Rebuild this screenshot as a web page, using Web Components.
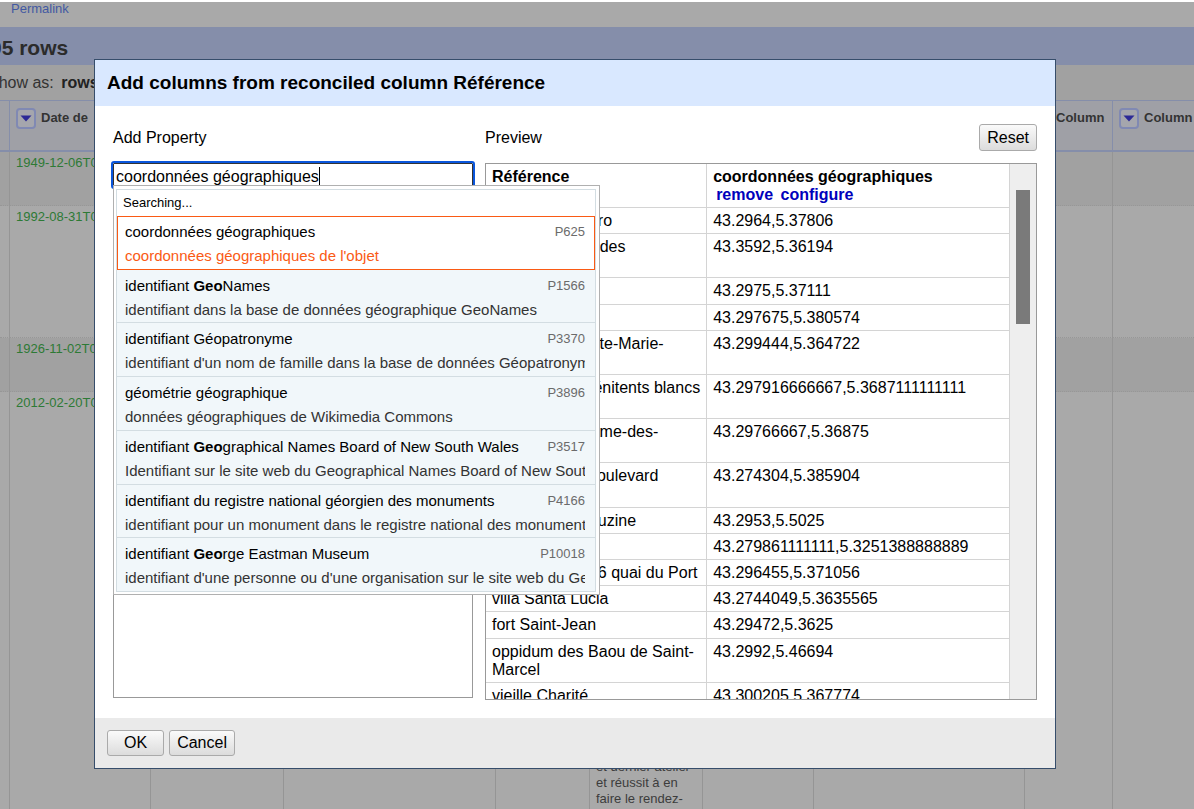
<!DOCTYPE html>
<html lang="fr">
<head>
<meta charset="utf-8">
<title>Add columns from reconciled column Référence</title>
<style>
  html, body { margin: 0; height: 100%; }
  body { font: 16px/18px "Liberation Sans", Arial, sans-serif; color: #000; background: #fff; overflow: hidden; }
</style>
</head>
<body>
<refine-project></refine-project>
<refine-dialog>
  <span slot="title">Add columns from reconciled column Référence</span>
  <property-suggest>
    <suggest-item code="P625" active>coordonnées géographiques<span slot="desc">coordonnées géographiques de l'objet</span></suggest-item>
    <suggest-item code="P1566">identifiant <b>Geo</b>Names<span slot="desc">identifiant dans la base de données géographique GeoNames</span></suggest-item>
    <suggest-item code="P3370">identifiant Géopatronyme<span slot="desc">identifiant d'un nom de famille dans la base de données Géopatronyme</span></suggest-item>
    <suggest-item code="P3896">géométrie géographique<span slot="desc">données géographiques de Wikimedia Commons</span></suggest-item>
    <suggest-item code="P3517">identifiant <b>Geo</b>graphical Names Board of New South Wales<span slot="desc">Identifiant sur le site web du Geographical Names Board of New South Wales</span></suggest-item>
    <suggest-item code="P4166">identifiant du registre national géorgien des monuments<span slot="desc">identifiant pour un monument dans le registre national des monuments</span></suggest-item>
    <suggest-item code="P10018">identifiant <b>Geo</b>rge Eastman Museum<span slot="desc">identifiant d'une personne ou d'une organisation sur le site web du George</span></suggest-item>
  </property-suggest>
  <column-preview></column-preview>
  <refine-button slot="footer" wide>OK</refine-button>
  <refine-button slot="footer">Cancel</refine-button>
</refine-dialog>

<script>
const define = (name, html, setup) => customElements.define(name, class extends HTMLElement {
  constructor() {
    super();
    this.attachShadow({ mode: 'open' }).innerHTML = html;
  }
  connectedCallback() { if (setup) setup(this, this.shadowRoot); }
});

/* Push button */
define('refine-button', `
  <style>
    :host { display: block; }
    button {
      box-sizing: border-box; height: 26px; padding: 0 7px; border: 1px solid #aaa; border-radius: 3px;
      background: linear-gradient(#fafafa, #dcdcdc); font: inherit; color: #000; display: block;
    }
    :host([wide]) button { padding: 0 16px; }
    :host([tall]) button { height: 27px; }
  </style>
  <button type="button"><slot></slot></button>`);

/* Column menu trigger of the data grid */
define('column-menu', `
  <style>
    :host { display: block; flex: none; }
    button {
      box-sizing: border-box; width: 20px; height: 21px; padding: 0; display: grid; place-items: center;
      border: 2px solid #8089b3; border-radius: 4px; background: #a5a6ad;
    }
    svg { display: block; }
  </style>
  <button type="button" aria-label="Column menu"><svg width="12" height="7" viewBox="0 0 12 7"><path d="M0.5 0.5H11.5L6 6.5Z" fill="#2c2996"/></svg></button>`);

/* Project page behind the dialog */
define('refine-project', `
  <style>
    :host { display: flex; flex-direction: column; height: 100%; box-sizing: border-box; padding-top: 2px; overflow: hidden; color: #333; }
    .top { flex: none; height: 25px; padding-left: 11px; background: #a9a9a9; font-size: 13px; line-height: 13px; }
    a { color: #4359a2; text-decoration: none; }
    h1 { flex: none; margin: 0; font-size: 21px; line-height: 42px; height: 38px; background: #858eaa; color: #2b2b2b; text-indent: -10px; white-space: nowrap; }
    .view { flex: none; height: 35px; line-height: 35px; background: #a1a1a1; text-indent: -12px; white-space: nowrap; }
    .view b { margin-left: 3px; color: #222; }
    table { width: 100%; height: 100%; table-layout: fixed; border-collapse: separate; border-spacing: 0; font-size: 13px; line-height: 16px; }
    .grid { flex: 1; min-height: 0; background: #a9a9a9; }
    th { box-sizing: border-box; height: 52px; padding: 6px 0 0 6px; vertical-align: top; text-align: left; background: #9fa0a6; border-top: 1px solid #858eaa; border-bottom: 2px solid #858eaa; border-right: 1px solid #858eaa; overflow: hidden; }
    th div { display: flex; gap: 5px; align-items: center; white-space: nowrap; height: 22px; }
    td { box-sizing: border-box; padding: 3px 6px 1px; vertical-align: top; border-right: 1px solid #959595; border-bottom: 1px dotted #979797; overflow: hidden; white-space: nowrap; }
    th:first-child, td:first-child { padding: 0; }
    th:last-child, td:last-child { border-right: 0; }
    tbody tr:nth-child(odd) { background: #a1a1a1; }
    tbody tr.last td { border-bottom: 0; }
    .date { color: #2d7a35; }
    .last .note { vertical-align: bottom; color: #3c3c3c; padding-bottom: 2px; }
    .s { height: 54px; } .m { height: 132px; }
  </style>
  <div class="top"><a href="#permalink">Permalink</a></div>
  <h1>05 rows</h1>
  <div class="view">Show as: <b>rows</b></div>
  <div class="grid"><table>
    <colgroup></colgroup>
    <thead><tr></tr></thead>
    <tbody></tbody>
  </table></div>`, (host, root) => {
  const widths = [10, 141, 133, 212, 94, 113, 111, 211, 88, 0];
  const heads = ['', 'Date de', '', '', '', '', '', '', 'Column', 'Column'];
  root.querySelector('colgroup').innerHTML = widths.map(w => w ? `<col style="width:${w}px">` : '<col>').join('');
  root.querySelector('thead tr').innerHTML = heads.map(h => h ? `<th><div><column-menu></column-menu>${h}</div></th>` : '<th></th>').join('');
  const rows = [['1949-12-06T00:00:00Z', 's'], ['1992-08-31T00:00:00Z', 'm'], ['1926-11-02T00:00:00Z', 's'], ['2012-02-20T00:00:00Z', 'last']];
  root.querySelector('tbody').innerHTML = rows.map(([date, cls]) =>
    `<tr class="${cls}">` + widths.map((w, i) =>
      i === 1 ? `<td class="date">${date}</td>` :
      i === 5 && cls === 'last' ? '<td class="note">et dernier atelier<br>et réussit à en<br>faire le rendez-</td>' : '<td></td>').join('') + '</tr>').join('');
});

/* Modal frame */
define('refine-dialog', `
  <style>
    :host { position: fixed; inset: 0; box-sizing: border-box; padding: 59px 138px 40px 94px; }
    section { border: 1px solid #364d6b; background: #fff; }
    h2 { margin: 0; padding: 0 12px; font-size: 19px; line-height: 46px; background: #d9e8ff; }
    .body { display: grid; grid-template-columns: 360px minmax(0, 1fr); gap: 12px; padding: 18px; }
    footer { display: flex; gap: 5px; padding: 12px; background: #eaeaea; }
  </style>
  <section role="dialog" aria-labelledby="t">
    <h2 id="t"><slot name="title"></slot></h2>
    <div class="body"><slot></slot></div>
    <footer><slot name="footer"></slot></footer>
  </section>`);

/* One entry of the suggestion list */
define('suggest-item', `
  <style>
    :host { display: block; box-sizing: border-box; min-width: 0; padding: 4px 10px 0 8px; background: #f1f7fa; border-bottom: 1px solid #d3dde2; font-size: 15px; line-height: 24px; white-space: nowrap; }
    :host([active]) { background: #fff; border: 1px solid #fa5a14; padding: 3px 9px 0 7px; }
    :host([active]) .desc { color: #fa5a14; }
    .name { display: flex; justify-content: space-between; }
    .code { font-size: 13px; color: #6b6b6b; }
    .desc { color: #333; overflow: hidden; }
  </style>
  <div class="name"><span><slot></slot></span><span class="code"></span></div>
  <div class="desc"><slot name="desc"></slot></div>`, (host, root) => {
  root.querySelector('.code').textContent = host.getAttribute('code');
});

/* Property search box with its suggestion popup */
define('property-suggest', `
  <style>
    :host { display: flex; flex-direction: column; position: relative; }
    label { line-height: 27px; margin-bottom: 12px; }
    .field { position: relative; }
    input { box-sizing: border-box; display: block; width: 100%; height: 24px; border: 1px solid #333; outline: 2px solid #0a56dc; border-radius: 1px; margin: 0; padding: 3px 2px 0; font: inherit; color: #000; background: #fff; }
    .caret { position: absolute; left: 206px; top: 4px; width: 1px; height: 18px; background: #000; }
    .chosen { flex: 1; margin: 4px 0 2px; border: 1px solid #999; }
    .popup { position: absolute; left: 0; top: 61px; width: 487px; box-sizing: border-box; border: 1px solid #b0b0b0; background: #fff; padding: 3px 3px 2px 2px; }
    .list { border: 1px solid #d3dde2; border-bottom: 0; }
    .status { font-size: 13px; line-height: 26px; padding: 0 6px; }
    .items { display: grid; grid-auto-rows: 1fr; height: 376px; }
  </style>
  <label for="q">Add Property</label>
  <div class="field"><input id="q" type="text" value="coordonnées géographiques" autocomplete="off"><span class="caret"></span></div>
  <div class="chosen"></div>
  <div class="popup"><div class="list">
    <div class="status">Searching...</div>
    <div class="items"><slot></slot></div>
  </div></div>`);

/* Preview of the fetched column */
define('column-preview', `
  <style>
    :host { display: block; min-width: 0; }
    header { display: flex; justify-content: space-between; margin-bottom: 12px; line-height: 27px; }
    refine-button { line-height: 18px; }
    .frame { display: flex; height: 535px; overflow: hidden; border: 1px solid #999; }
    table { flex: 1; height: 545px; border-collapse: separate; border-spacing: 0; table-layout: fixed; min-width: 0; }
    th, td { box-sizing: border-box; padding: 4px 6px 3px; text-align: left; vertical-align: top; border-right: 1px solid #d4d4d4; border-bottom: 1px solid #d4d4d4; }
    th { height: 44px; }
    th:first-child { width: 220px; }
    td.multi { white-space: nowrap; }
    a { color: #00b; text-decoration: none; margin-left: 3px; }
    .track { flex: none; width: 26px; padding-top: 26px; background: #eee; }
    .thumb { width: 14px; height: 134px; margin-left: 6px; background: #7a7a7a; }
  </style>
  <header><span>Preview</span><refine-button tall>Reset</refine-button></header>
  <div class="frame">
    <table>
      <thead><tr><th>Référence</th><th>coordonnées géographiques<br><a href="#remove">remove</a> <a href="#configure">configure</a></th></tr></thead>
      <tbody></tbody>
    </table>
    <div class="track"><div class="thumb"></div></div>
  </div>`, (host, root) => {
  const rows = [
    ['bouche de métro', '43.2964,5.37806'],
    ['petite chapelle des<br>Tuileries', '43.3592,5.36194'],
    ['', '43.2975,5.37111'],
    ['', '43.297675,5.380574'],
    ['métropole Sainte-Marie-<br>Majeure', '43.299444,5.364722'],
    ['couvent des Pénitents blancs<br>de Marseille', '43.297916666667,5.3687111111111'],
    ['place Notre-Dame-des-<br>Accoules', '43.29766667,5.36875'],
    ['immeuble 20 boulevard<br>Michelet', '43.274304,5.385904'],
    ['maison de la Buzine', '43.2953,5.5025'],
    ['', '43.279861111111,5.3251388888889'],
    ['immeuble 32-66 quai du Port', '43.296455,5.371056'],
    ['villa Santa Lucia', '43.2744049,5.3635565'],
    ['fort Saint-Jean', '43.29472,5.3625'],
    ['oppidum des Baou de Saint-Marcel', '43.2992,5.46694'],
    ['vieille Charité', '43.300205,5.367774']
  ];
  root.querySelector('tbody').innerHTML = rows.map(([a, b]) => `<tr><td${a.includes('<br>') ? ' class="multi"' : ''}>${a}</td><td>${b}</td></tr>`).join('');
});
</script>
</body>
</html>
